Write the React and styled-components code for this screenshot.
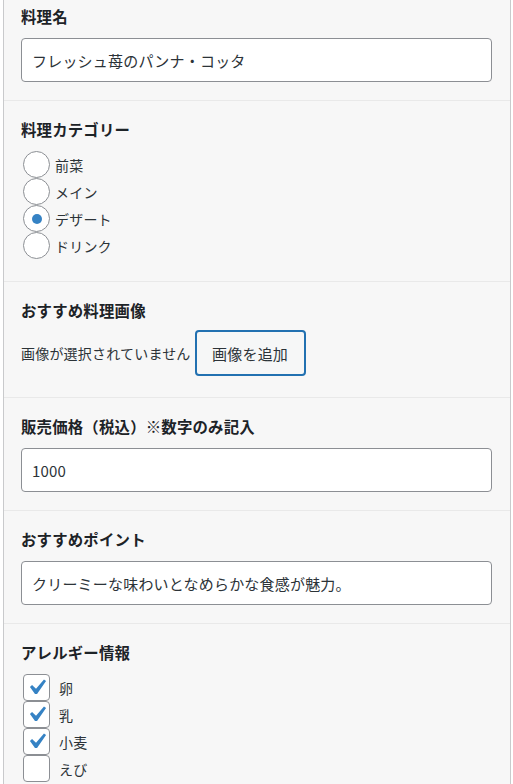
import React from "react";
import styled, { createGlobalStyle } from "styled-components";

const Global = createGlobalStyle`
  html, body { margin: 0; padding: 0; background: #ffffff; }
  body {
    font-family: "Noto Sans CJK JP", "Noto Sans", sans-serif;
    color: #2c3338;
    text-spacing-trim: space-all;
    letter-spacing: 0.2px;
  }
  * { box-sizing: border-box; }
`;

const Panel = styled.div`
  margin: 0 2px 0 3px;
  min-height: 784px;
  background: #f7f7f7;
  border-left: 1px solid #c9cacc;
  border-right: 1px solid #c9cacc;
`;

const Field = styled.section`
  border-top: ${(p) => (p.$first ? "none" : "1px solid #e9e9e9")};
  padding: ${(p) => (p.$first ? "5px" : "17px")} 18px ${(p) => p.$pb || 18}px 17px;
`;

const Label = styled.div`
  font-size: 15.4px;
  font-weight: 700;
  line-height: 22px;
  color: #1d2327;
  margin-bottom: 11px;
`;

const TextInput = styled.div`
  height: 44px;
  background: #fff;
  border: 1px solid #8c8f94;
  border-radius: 4px;
  padding: 0 10px;
  display: flex;
  align-items: center;
  font-size: 15px;
  color: #2c3338;
`;

const List = styled.ul`
  list-style: none;
  margin: 0;
  padding: 0 0 0 2px;
`;

const Option = styled.li`
  display: flex;
  align-items: center;
  height: 27px;
  font-size: 14px;
  color: #2c3338;
`;

const RadioCircle = styled.span`
  position: relative;
  width: 27px;
  height: 27px;
  flex: none;
  border: 1px solid #8c8f94;
  border-radius: 50%;
  background: #fff;
  margin-right: 5px;
  display: flex;
  align-items: center;
  justify-content: center;
  &::before {
    content: "";
    display: ${(p) => (p.$checked ? "block" : "none")};
    width: 10px;
    height: 10px;
    border-radius: 50%;
    background: #3582c4;
  }
`;

const Box = styled.span`
  position: relative;
  width: 27px;
  height: 27px;
  flex: none;
  border: 1px solid #8c8f94;
  border-radius: 4px;
  background: #fff;
  margin-right: 9px;
`;

const Tick = styled.svg`
  position: absolute;
  left: -3px;
  top: -3px;
  width: 31px;
  height: 31px;
  fill: #3582c4;
`;

const ImageRow = styled.div`
  display: flex;
  align-items: center;
  gap: 4px;
  margin-top: -2px;
  margin-bottom: 3px;
  font-size: 14px;
  color: #2c3338;
`;

const Button = styled.button`
  height: 46px;
  width: 111px;
  border: 2px solid #2271b1;
  border-radius: 4px;
  background: #f6f7f7;
  color: #2c3338;
  font-family: inherit;
  font-size: 15px;
  letter-spacing: 0.2px;
  padding: 0;
`;

const radios = ["前菜", "メイン", "デザート", "ドリンク"];
const allergies = [
  { name: "卵", on: true },
  { name: "乳", on: true },
  { name: "小麦", on: true },
  { name: "えび", on: false },
];

export default function App() {
  return (
    <>
      <Global />
      <Panel>
        <Field $first>
          <Label>料理名</Label>
          <TextInput>フレッシュ苺のパンナ・コッタ</TextInput>
        </Field>
        <Field $pb={22}>
          <Label>料理カテゴリー</Label>
          <List>
            {radios.map((r) => (
              <Option key={r}>
                <RadioCircle $checked={r === "デザート"} />
                {r}
              </Option>
            ))}
          </List>
        </Field>
        <Field>
          <Label>おすすめ料理画像</Label>
          <ImageRow>
            画像が選択されていません
            <Button>画像を追加</Button>
          </ImageRow>
        </Field>
        <Field>
          <Label>販売価格（税込）※数字のみ記入</Label>
          <TextInput>1000</TextInput>
        </Field>
        <Field>
          <Label>おすすめポイント</Label>
          <TextInput>クリーミーな味わいとなめらかな食感が魅力。</TextInput>
        </Field>
        <Field>
          <Label>アレルギー情報</Label>
          <List>
            {allergies.map((a) => (
              <Option key={a.name}>
                <Box>
                  {a.on && (
                    <Tick viewBox="0 0 20 20">
                      <path d="M14.83 4.89l1.34.94-5.81 8.38H9.02L5.78 9.67l1.34-1.25 2.57 2.4z" />
                    </Tick>
                  )}
                </Box>
                {a.name}
              </Option>
            ))}
          </List>
        </Field>
      </Panel>
    </>
  );
}
